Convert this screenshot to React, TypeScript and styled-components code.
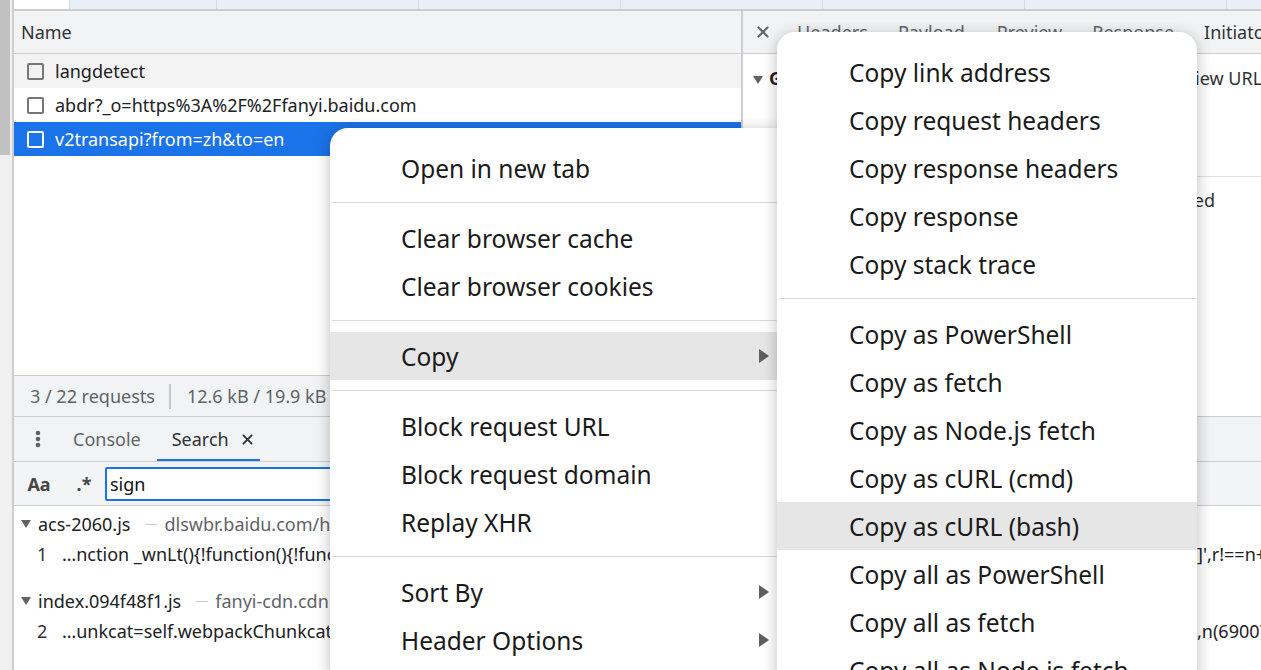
import React from 'react'
import styled, { createGlobalStyle } from 'styled-components'

const UI_FONT = `'Noto Sans', 'Open Sans', 'Liberation Sans', sans-serif`

const GlobalStyle = createGlobalStyle`
  html, body {
    margin: 0;
    padding: 0;
    overflow: hidden;
    background: #fff;
  }
  body {
    font-family: ${UI_FONT};
  }
`

const Screen = styled.div`
  position: relative;
  width: 1261px;
  height: 670px;
  display: flex;
  overflow: hidden;
  background: #fff;
`

const Gutter = styled.div`
  width: 12px;
  flex-shrink: 0;
  background: #f0f0f0;
  border-right: 2px solid #cbcdd1;
`

const GutterThumb = styled.div`
  width: 10px;
  height: 155px;
  background: #c1c1c1;
`

const DevTools = styled.div`
  flex: 1;
  min-width: 0;
  display: flex;
  flex-direction: column;
  font-size: 18px;
  color: #202124;
`

const TabStrip = styled.div`
  height: 9px;
  flex-shrink: 0;
  display: flex;
  background: #e8eff9;
  border-bottom: 2px solid #cbcdd1;
`

const StripTab = styled.div<{ $w: number; $active?: boolean }>`
  width: ${({ $w }) => $w}px;
  flex-shrink: 0;
  background: ${({ $active }) => ($active ? '#fff' : 'transparent')};
  border-right: 1px solid #d5dae2;
`

const MainSplit = styled.div`
  height: 405px;
  flex-shrink: 0;
  display: flex;
`

const RequestsPanel = styled.div`
  width: 727px;
  flex-shrink: 0;
  display: flex;
  flex-direction: column;
  border-right: 2px solid #cbcdd1;
`

const HeaderBar = styled.div`
  height: 42px;
  flex-shrink: 0;
  display: flex;
  align-items: center;
  background: #f1f3f4;
  border-bottom: 1px solid #cbcdd1;
`

const NameTitle = styled.span`
  padding-left: 7px;
  color: #303134;
`

const RequestRow = styled.div<{ $tone: 'gray' | 'white' | 'selected' }>`
  height: 34px;
  flex-shrink: 0;
  display: flex;
  align-items: center;
  gap: 11px;
  padding-left: 13px;
  white-space: nowrap;
  background: ${({ $tone }) => ($tone === 'selected' ? '#1a73e8' : $tone === 'gray' ? '#f3f3f3' : '#fff')};
  color: ${({ $tone }) => ($tone === 'selected' ? '#fff' : '#202124')};
`

const Checkbox = styled.span<{ $light?: boolean }>`
  width: 13px;
  height: 13px;
  border: 2px solid ${({ $light }) => ($light ? '#fff' : '#767676')};
  border-radius: 2px;
  flex-shrink: 0;
`

const RowsFiller = styled.div`
  flex: 1;
  background: #fff;
`

const StatusBar = styled.div`
  height: 40px;
  flex-shrink: 0;
  display: flex;
  align-items: center;
  padding-left: 16px;
  background: #f1f3f4;
  border-top: 1px solid #cbcdd1;
  color: #5f6368;
  white-space: nowrap;
`

const StatusDivider = styled.span`
  width: 2px;
  height: 25px;
  background: #c4c7cc;
  margin: 0 16px 0 14px;
`

const DetailsPanel = styled.div`
  flex: 1;
  min-width: 0;
  display: flex;
  flex-direction: column;
`

const DetailTabs = styled.div`
  height: 42px;
  flex-shrink: 0;
  display: flex;
  align-items: center;
  padding-left: 14px;
  background: #f1f3f4;
  border-bottom: 1px solid #cbcdd1;
  overflow: hidden;
  white-space: nowrap;

  & > svg {
    flex-shrink: 0;
    margin-right: 28px;
  }
`

const DetailTab = styled.span<{ $dark?: boolean; $gap: number }>`
  flex-shrink: 0;
  margin-right: ${({ $gap }) => $gap}px;
  color: ${({ $dark }) => ($dark ? '#303134' : '#5f6368')};
`

const SectionTitle = styled.div`
  height: 123px;
  flex-shrink: 0;
  box-sizing: border-box;
  display: flex;
  align-items: flex-start;
  gap: 6px;
  padding: 12px 0 0 10px;
  font-weight: 700;
  white-space: nowrap;
  overflow: hidden;
  border-bottom: 1px solid #e0e0e0;
`

const TitleArrow = styled.span`
  margin-top: 10px;
  display: flex;
`

const SectionLink = styled.span`
  margin-left: auto;
  margin-right: -80px;
  font-weight: 400;
  color: #303134;
`

const SectionBody = styled.div`
  padding: 11px 46px 0 0;
  display: flex;
  justify-content: flex-end;
  white-space: nowrap;
  color: #303134;
`

const Drawer = styled.div`
  flex: 1;
  display: flex;
  flex-direction: column;
  border-top: 1px solid #cbcdd1;
`

const DrawerTabs = styled.div`
  height: 44px;
  flex-shrink: 0;
  display: flex;
  align-items: stretch;
  background: #f1f3f4;
  border-bottom: 1px solid #cbcdd1;
  color: #5f6368;
`

const DotsButton = styled.div`
  width: 48px;
  display: flex;
  align-items: center;
  justify-content: center;
`

const DrawerTab = styled.div<{ $active?: boolean }>`
  display: flex;
  align-items: center;
  gap: 13px;
  padding: ${({ $active }) => ($active ? '0 7px 0 15px' : '0 16px 0 11px')};
  color: ${({ $active }) => ($active ? '#303134' : '#5f6368')};
  box-shadow: ${({ $active }) => ($active ? 'inset 0 -2px 0 #1a73e8' : 'none')};

  & > svg {
    flex-shrink: 0;
  }
`

const SearchBar = styled.div`
  height: 43px;
  flex-shrink: 0;
  display: flex;
  align-items: center;
  background: #f3f4f6;
  border-bottom: 1px solid #cbcdd1;
`

const ToggleButton = styled.span<{ $w: number }>`
  width: ${({ $w }) => $w}px;
  text-align: center;
  font-weight: 700;
  color: #474747;
`

const SearchInput = styled.div`
  height: 30px;
  width: 600px;
  display: flex;
  align-items: center;
  margin-left: 1px;
  padding-left: 3px;
  background: #fff;
  border: 2px solid #1a73e8;
  border-radius: 2px;
  color: #111;
`

const Results = styled.div`
  flex: 1;
  padding-top: 3px;
  background: #fff;
  white-space: nowrap;
`

const ResultGroup = styled.div`
  margin-bottom: 17px;
`

const ResultFile = styled.div`
  height: 30px;
  display: flex;
  align-items: center;
  padding-left: 7px;
`

const FileName = styled.span`
  margin-left: 7px;
  color: #202124;
`

const FileDash = styled.span`
  width: 12px;
  height: 1px;
  flex-shrink: 0;
  background: #c8c8c8;
  margin: 0 7px 0 15px;
`

const FileUrl = styled.span`
  color: #5f6368;
`

const ResultLine = styled.div`
  height: 30px;
  display: flex;
  align-items: center;
  padding-left: 23px;
`

const LineNumber = styled.span`
  width: 25px;
  flex-shrink: 0;
  color: #303134;
`

const LineCode = styled.span`
  flex: 1;
  min-width: 0;
  overflow: hidden;
  color: #202124;
`

const LineTail = styled.span`
  width: 64px;
  flex-shrink: 0;
  overflow: hidden;
  color: #202124;
`

const Menu = styled.div<{ $top: number; $left: number; $width: number }>`
  position: absolute;
  top: ${({ $top }) => $top}px;
  left: ${({ $left }) => $left}px;
  width: ${({ $width }) => $width}px;
  padding: 16px 0 20px;
  background: #fff;
  border-radius: 18px;
  box-shadow: 0 3px 16px rgba(0, 0, 0, 0.26);
  font-family: ${UI_FONT};
  font-size: 24.5px;
  color: #1a1a1a;
`

const MenuItem = styled.div<{ $hot?: boolean; $indent: number }>`
  height: 48px;
  display: flex;
  align-items: center;
  padding: 0 23px 0 ${({ $indent }) => $indent}px;
  background: ${({ $hot }) => ($hot ? '#e6e6e6' : 'transparent')};
  white-space: nowrap;
`

const MenuLabel = styled.span`
  flex: 1;
`

const SubArrow = styled.span`
  width: 0;
  height: 0;
  border-left: 10px solid #5f5f5f;
  border-top: 7px solid transparent;
  border-bottom: 7px solid transparent;
`

const MenuSeparator = styled.div`
  height: 1px;
  margin: 10px 0 11px 2px;
  background: #dadada;
`

const Triangle = styled.span`
  width: 0;
  height: 0;
  flex-shrink: 0;
  border-top: 8px solid #5f6368;
  border-left: 5px solid transparent;
  border-right: 5px solid transparent;
`

function CloseGlyph({ color, size }: { color: string; size: number }) {
  return (
    <svg width={size} height={size} viewBox="0 0 12 12">
      <path d="M1.5 1.5 L10.5 10.5 M10.5 1.5 L1.5 10.5" stroke={color} strokeWidth="2" strokeLinecap="round" />
    </svg>
  )
}

function Dots() {
  return (
    <svg width="6" height="18" viewBox="0 0 6 18">
      <circle cx="3" cy="3" r="2.3" fill="#5f6368" />
      <circle cx="3" cy="9" r="2.3" fill="#5f6368" />
      <circle cx="3" cy="15" r="2.3" fill="#5f6368" />
    </svg>
  )
}

type Entry = { label: string; sub?: boolean; hot?: boolean } | 'sep'

const mainMenu: Entry[] = [
  { label: 'Open in new tab' },
  'sep',
  { label: 'Clear browser cache' },
  { label: 'Clear browser cookies' },
  'sep',
  { label: 'Copy', sub: true, hot: true },
  'sep',
  { label: 'Block request URL' },
  { label: 'Block request domain' },
  { label: 'Replay XHR' },
  'sep',
  { label: 'Sort By', sub: true },
  { label: 'Header Options', sub: true },
]

const copyMenu: Entry[] = [
  { label: 'Copy link address' },
  { label: 'Copy request headers' },
  { label: 'Copy response headers' },
  { label: 'Copy response' },
  { label: 'Copy stack trace' },
  'sep',
  { label: 'Copy as PowerShell' },
  { label: 'Copy as fetch' },
  { label: 'Copy as Node.js fetch' },
  { label: 'Copy as cURL (cmd)' },
  { label: 'Copy as cURL (bash)', hot: true },
  { label: 'Copy all as PowerShell' },
  { label: 'Copy all as fetch' },
  { label: 'Copy all as Node.js fetch' },
]

function ContextMenu({ entries, top, left, width, indent }: { entries: Entry[]; top: number; left: number; width: number; indent: number }) {
  return (
    <Menu $top={top} $left={left} $width={width}>
      {entries.map((e, i) =>
        e === 'sep' ? (
          <MenuSeparator key={i} />
        ) : (
          <MenuItem key={i} $hot={e.hot} $indent={indent}>
            <MenuLabel>{e.label}</MenuLabel>
            {e.sub && <SubArrow />}
          </MenuItem>
        )
      )}
    </Menu>
  )
}

const stripWidths = [55, 146, 201, 201, 201, 201, 201, 201]

const detailTabs = [
  { label: 'Headers', gap: 30 },
  { label: 'Payload', gap: 32 },
  { label: 'Preview', gap: 30 },
  { label: 'Response', gap: 30 },
  { label: 'Initiator', gap: 30, dark: true },
]

export default function App() {
  return (
    <>
      <GlobalStyle />
      <Screen>
        <Gutter>
          <GutterThumb />
        </Gutter>
        <DevTools>
          <TabStrip>
            {stripWidths.map((w, i) => (
              <StripTab key={i} $w={w} $active={i === 0} />
            ))}
          </TabStrip>
          <MainSplit>
            <RequestsPanel>
              <HeaderBar>
                <NameTitle>Name</NameTitle>
              </HeaderBar>
              <RequestRow $tone="gray">
                <Checkbox />
                langdetect
              </RequestRow>
              <RequestRow $tone="white">
                <Checkbox />
                abdr?_o=https%3A%2F%2Ffanyi.baidu.com
              </RequestRow>
              <RequestRow $tone="selected">
                <Checkbox $light />
                v2transapi?from=zh&amp;to=en
              </RequestRow>
              <RowsFiller />
              <StatusBar>
                3 / 22 requests
                <StatusDivider />
                12.6 kB / 19.9 kB transferred
              </StatusBar>
            </RequestsPanel>
            <DetailsPanel>
              <DetailTabs>
                <CloseGlyph color="#5f6368" size={12} />
                {detailTabs.map((t) => (
                  <DetailTab key={t.label} $gap={t.gap} $dark={t.dark}>
                    {t.label}
                  </DetailTab>
                ))}
              </DetailTabs>
              <SectionTitle>
                <TitleArrow>
                  <Triangle />
                </TitleArrow>
                General
                <SectionLink>View URL-encoded</SectionLink>
              </SectionTitle>
              <SectionBody>Status: finished</SectionBody>
            </DetailsPanel>
          </MainSplit>
          <Drawer>
            <DrawerTabs>
              <DotsButton>
                <Dots />
              </DotsButton>
              <DrawerTab>Console</DrawerTab>
              <DrawerTab $active>
                Search
                <CloseGlyph color="#303134" size={11} />
              </DrawerTab>
            </DrawerTabs>
            <SearchBar>
              <ToggleButton $w={50}>Aa</ToggleButton>
              <ToggleButton $w={40}>.*</ToggleButton>
              <SearchInput>sign</SearchInput>
            </SearchBar>
            <Results>
              <ResultGroup>
                <ResultFile>
                  <Triangle />
                  <FileName>acs-2060.js</FileName>
                  <FileDash />
                  <FileUrl>dlswbr.baidu.com/heicha/mw/abclite-2060-s.js</FileUrl>
                </ResultFile>
                <ResultLine>
                  <LineNumber>1</LineNumber>
                  <LineCode>…nction _wnLt(){'{'}!function(){'{'}!function</LineCode>
                  <LineTail>]',r!==n+</LineTail>
                </ResultLine>
              </ResultGroup>
              <ResultGroup>
                <ResultFile>
                  <Triangle />
                  <FileName>index.094f48f1.js</FileName>
                  <FileDash />
                  <FileUrl>fanyi-cdn.cdn.bcebos.com/webStatic/translation/js/index.094f48f1.js</FileUrl>
                </ResultFile>
                <ResultLine>
                  <LineNumber>2</LineNumber>
                  <LineCode>…unkcat=self.webpackChunkcat</LineCode>
                  <LineTail>,n(69007)</LineTail>
                </ResultLine>
              </ResultGroup>
            </Results>
          </Drawer>
        </DevTools>
        <ContextMenu entries={mainMenu} top={128} left={330} width={462} indent={71} />
        <ContextMenu entries={copyMenu} top={32} left={777} width={420} indent={72} />
      </Screen>
    </>
  )
}
